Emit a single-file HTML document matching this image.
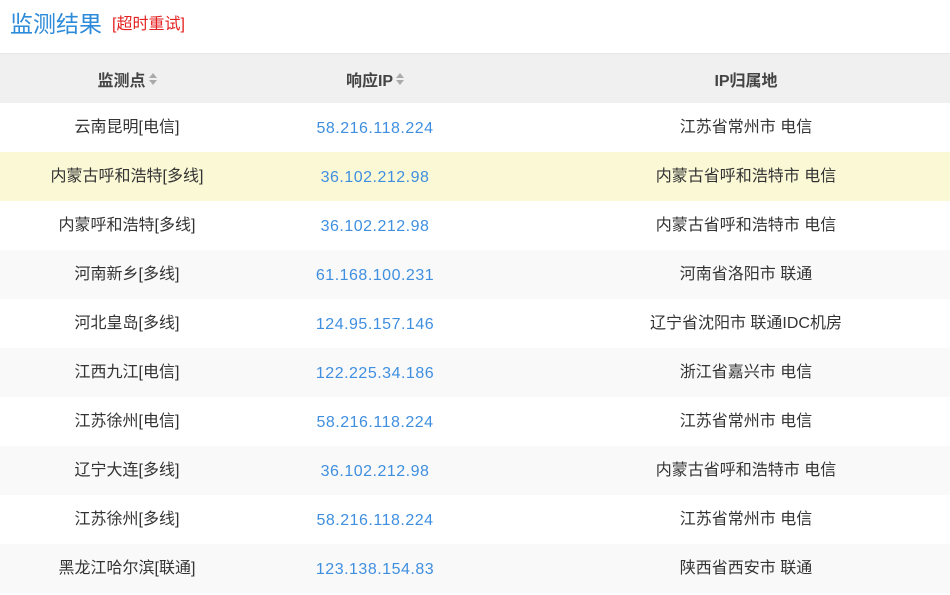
<!DOCTYPE html>
<html><head><meta charset="utf-8"><style>
body{margin:0;width:950px;height:595px;background:#fff;font-family:"Liberation Sans","Noto Sans CJK SC",sans-serif;overflow:hidden}
.title{position:absolute;left:10px;top:9px;font-size:23px;color:#2e8bd9;line-height:30px}
.retry{position:absolute;left:112px;top:15px;font-size:16px;color:#e52222;line-height:20px}
table{position:absolute;top:53px;left:0;width:950px;border-collapse:collapse;table-layout:fixed}
th{background:#f0f0f0;height:49px;font-size:16px;font-weight:bold;color:#444;border-top:1px solid #e6e6e6;padding:0}
td{height:49px;padding:0;font-size:16px;color:#333;text-align:center;line-height:20px}
td.ip{color:#3f8fe0;font-size:16px;letter-spacing:0.5px;padding-top:2px;height:47px}
td.loc{padding-left:46px}
tr.a td{background:#f9f9f9}
tr.h td{background:#fbf8d6}
.s{display:inline-block;vertical-align:middle;margin-left:3px;width:8px;height:14px;position:relative;top:-2px}
.s:before{content:"";position:absolute;left:0;top:1px;border:4px solid transparent;border-bottom:5px solid #aaa;border-top:0}
.s:after{content:"";position:absolute;left:0;top:8px;border:4px solid transparent;border-top:5px solid #aaa;border-bottom:0}
</style></head><body>
<div class="title">监测结果</div>
<div class="retry">[超时重试]</div>
<table>
<colgroup><col style="width:254px"><col style="width:242px"><col style="width:454px"></colgroup>
<tr><th>监测点<span class="s"></span></th><th>响应IP<span class="s"></span></th><th style="padding-left:46px">IP归属地</th></tr>
<tr><td>云南昆明[电信]</td><td class="ip">58.216.118.224</td><td class="loc">江苏省常州市 电信</td></tr>
<tr class="h"><td>内蒙古呼和浩特[多线]</td><td class="ip">36.102.212.98</td><td class="loc">内蒙古省呼和浩特市 电信</td></tr>
<tr><td>内蒙呼和浩特[多线]</td><td class="ip">36.102.212.98</td><td class="loc">内蒙古省呼和浩特市 电信</td></tr>
<tr class="a"><td>河南新乡[多线]</td><td class="ip">61.168.100.231</td><td class="loc">河南省洛阳市 联通</td></tr>
<tr><td>河北皇岛[多线]</td><td class="ip">124.95.157.146</td><td class="loc">辽宁省沈阳市 联通IDC机房</td></tr>
<tr class="a"><td>江西九江[电信]</td><td class="ip">122.225.34.186</td><td class="loc">浙江省嘉兴市 电信</td></tr>
<tr><td>江苏徐州[电信]</td><td class="ip">58.216.118.224</td><td class="loc">江苏省常州市 电信</td></tr>
<tr class="a"><td>辽宁大连[多线]</td><td class="ip">36.102.212.98</td><td class="loc">内蒙古省呼和浩特市 电信</td></tr>
<tr><td>江苏徐州[多线]</td><td class="ip">58.216.118.224</td><td class="loc">江苏省常州市 电信</td></tr>
<tr class="a"><td>黑龙江哈尔滨[联通]</td><td class="ip">123.138.154.83</td><td class="loc">陕西省西安市 联通</td></tr>
</table>
</body></html>
